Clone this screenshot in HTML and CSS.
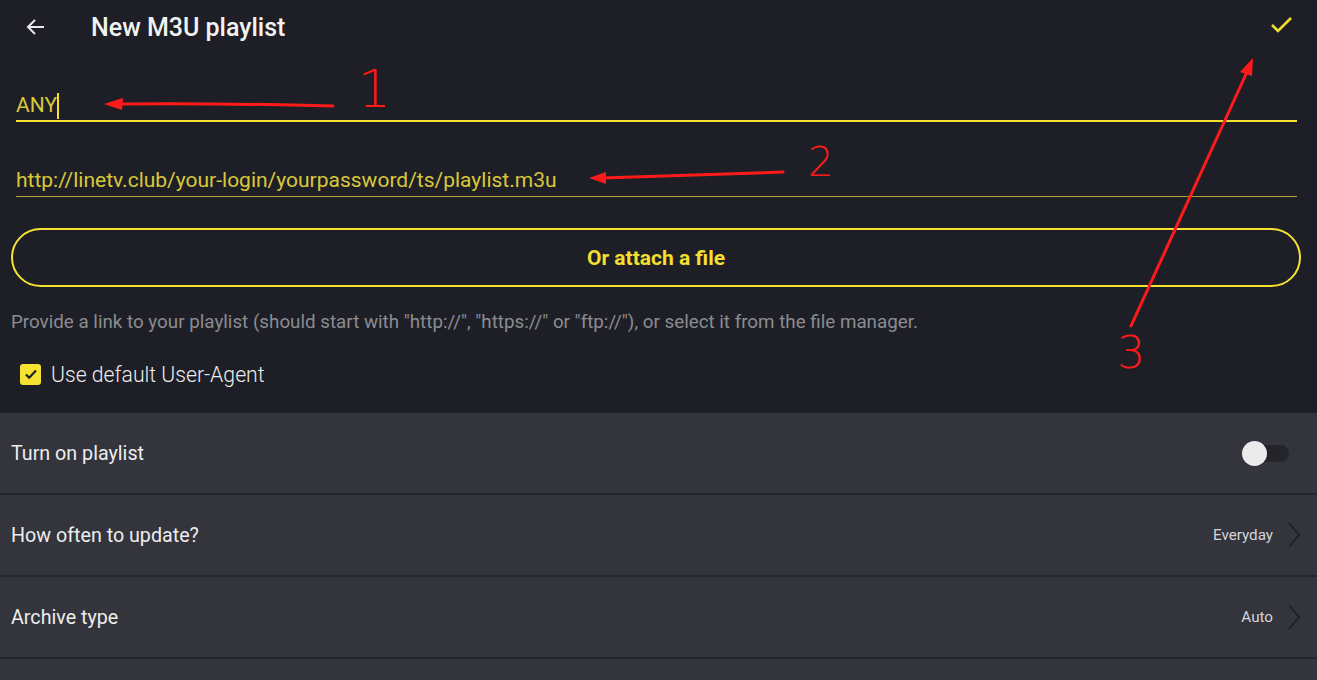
FILE: index.html
```html
<!DOCTYPE html>
<html lang="en">
<head>
    <meta charset="UTF-8">
    <meta name="viewport" content="width=device-width, initial-scale=1.0">
    <title>New M3U playlist</title>
    <link rel="stylesheet" href="styles.css">
</head>
<body>
    <div class="screen">
        <div class="topbar">
            <svg class="back" width="24" height="24" viewBox="0 0 24 24">
                <path d="M20 12H5M11 5l-7 7 7 7" fill="none" stroke="#e8e8e8" stroke-width="2"/>
            </svg>
            <h1>New M3U playlist</h1>
            <svg class="done" width="26" height="26" viewBox="0 0 26 26">
                <path d="M3 12l6 6L22 5" fill="none" stroke="#f2dd2c" stroke-width="2.6"/>
            </svg>
        </div>

        <div class="form">
            <div class="field active">
                <span class="value">ANY</span><span class="caret"></span>
            </div>
            <div class="field url">
                <span class="value">http://linetv.club/your-login/yourpassword/ts/playlist.m3u</span>
            </div>
            <button class="btn-attach">Or attach a file</button>
            <p class="hint">Provide a link to your playlist (should start with "http://", "https://" or "ftp://"), or select it from the file manager.</p>
            <label class="check">
                <span class="box">
                    <svg width="16" height="16" viewBox="0 0 16 16"><path d="M3 8.5l3.2 3.2L13 4.5" fill="none" stroke="#1e1f26" stroke-width="2.2"/></svg>
                </span>
                Use default User-Agent
            </label>
        </div>

        <div class="settings">
            <div class="row">
                <span>Turn on playlist</span>
                <span class="toggle"><span class="knob"></span></span>
            </div>
            <div class="row">
                <span>How often to update?</span>
                <span class="opt">Everyday <svg class="chev" width="14" height="28" viewBox="0 0 14 28"><path d="M2 2l10 12L2 26" fill="none" stroke="#1f2027" stroke-width="1.6"/></svg></span>
            </div>
            <div class="row">
                <span>Archive type</span>
                <span class="opt">Auto <svg class="chev" width="14" height="28" viewBox="0 0 14 28"><path d="M2 2l10 12L2 26" fill="none" stroke="#1f2027" stroke-width="1.6"/></svg></span>
            </div>
            <div class="row"></div>
        </div>

        <svg class="marks" width="1317" height="680" viewBox="0 0 1317 680">
            <g stroke="#ff1a1a" stroke-width="3" fill="none" stroke-linecap="round">
                <path d="M333 106 Q220 103 118 104"/>
                <path d="M783 172 Q690 175 602 178"/>
                <path d="M1131 326 L1247 72"/>
            </g>
            <g fill="#ff1a1a">
                <path d="M104 104 L123 98 L122 110 Z"/>
                <path d="M589 178 L606 172 L606 184 Z"/>
                <path d="M1253 58 L1240 72 L1252 76 Z"/>
            </g>
            <g class="num" fill="#ff1a1a">
                <text x="358" y="107">1</text>
                <text x="808" y="176" class="n2">2</text>
                <text x="1117" y="368" class="n3">3</text>
            </g>
        </svg>
    </div>
</body>
</html>
```

FILE: styles.css
```css
body {
    margin: 0;
    background-color: #1e1f26;
    font-family: Roboto, "Liberation Sans", sans-serif;
}
.screen {
    position: relative;
    width: 1317px;
    height: 680px;
    overflow: hidden;
    background: #1e1f26;
}
.topbar {
    height: 54px;
    display: flex;
    align-items: center;
    padding: 0 22px 0 24px;
}
.topbar h1 {
    margin: 0 0 0 43px;
    font-size: 25px;
    font-weight: 500;
    color: #f2f2f2;
    flex: 1;
}
.back {
    margin-top: -1px;
}
.done {
    margin-top: -3px;
}
.form {
    padding: 0 16px 0 11px;
}
.field {
    margin: 0 4px 0 5px;
    height: 67px;
    display: flex;
    align-items: flex-end;
    padding-bottom: 6px;
    box-sizing: border-box;
    border-bottom: 1px solid #b3a437;
    color: #d8c83a;
    font-size: 21px;
}
.field.active {
    height: 68px;
    border-bottom: 2px solid #f5e233;
    padding-bottom: 3px;
}
.field.url {
    height: 75px;
    padding-bottom: 4px;
}
.caret {
    display: inline-block;
    width: 2px;
    height: 26px;
    background: #f2df2e;
    margin-bottom: -2px;
}
.btn-attach {
    display: block;
    width: 100%;
    height: 59px;
    margin-top: 31px;
    border: 2px solid #f5e233;
    border-radius: 30px;
    background: transparent;
    color: #f2df2e;
    font-family: Roboto, "Liberation Sans", sans-serif;
    font-size: 21px;
    font-weight: 700;
    cursor: pointer;
}
.hint {
    margin: 24px 0 0;
    font-size: 18.8px;
    color: #8b8c92;
}
.check {
    display: flex;
    align-items: center;
    margin: 26px 0 0 9px;
    height: 30px;
    font-size: 21.2px;
    color: #ececec;
    font-weight: 300;
}
.box {
    width: 21px;
    height: 21px;
    background: #f5e233;
    border-radius: 3px;
    display: flex;
    align-items: center;
    justify-content: center;
    margin-right: 10px;
}
.settings {
    margin-top: 24px;
    background: #26272e;
}
.row {
    height: 80px;
    background: #33343c;
    margin-bottom: 2px;
    display: flex;
    align-items: center;
    justify-content: space-between;
    padding: 0 16px 0 11px;
    font-size: 19.7px;
    color: #ededed;
}
.opt {
    display: flex;
    align-items: center;
    font-size: 15.2px;
    color: #d5d5d8;
}
.chev {
    margin-left: 14px;
}
.toggle {
    position: relative;
    width: 40px;
    height: 17px;
    background: #24252b;
    border-radius: 9px;
    margin-right: 12px;
}
.knob {
    position: absolute;
    left: -7px;
    top: -4px;
    width: 25px;
    height: 25px;
    border-radius: 50%;
    background: #ebebeb;
}
.marks {
    position: absolute;
    left: 0;
    top: 0;
    pointer-events: none;
}
.num text {
    font-family: "DejaVu Sans", sans-serif;
    font-size: 52px;
    font-weight: 200;
}
.num .n2 {
    font-size: 40px;
}
.num .n3 {
    font-size: 44px;
}
```
